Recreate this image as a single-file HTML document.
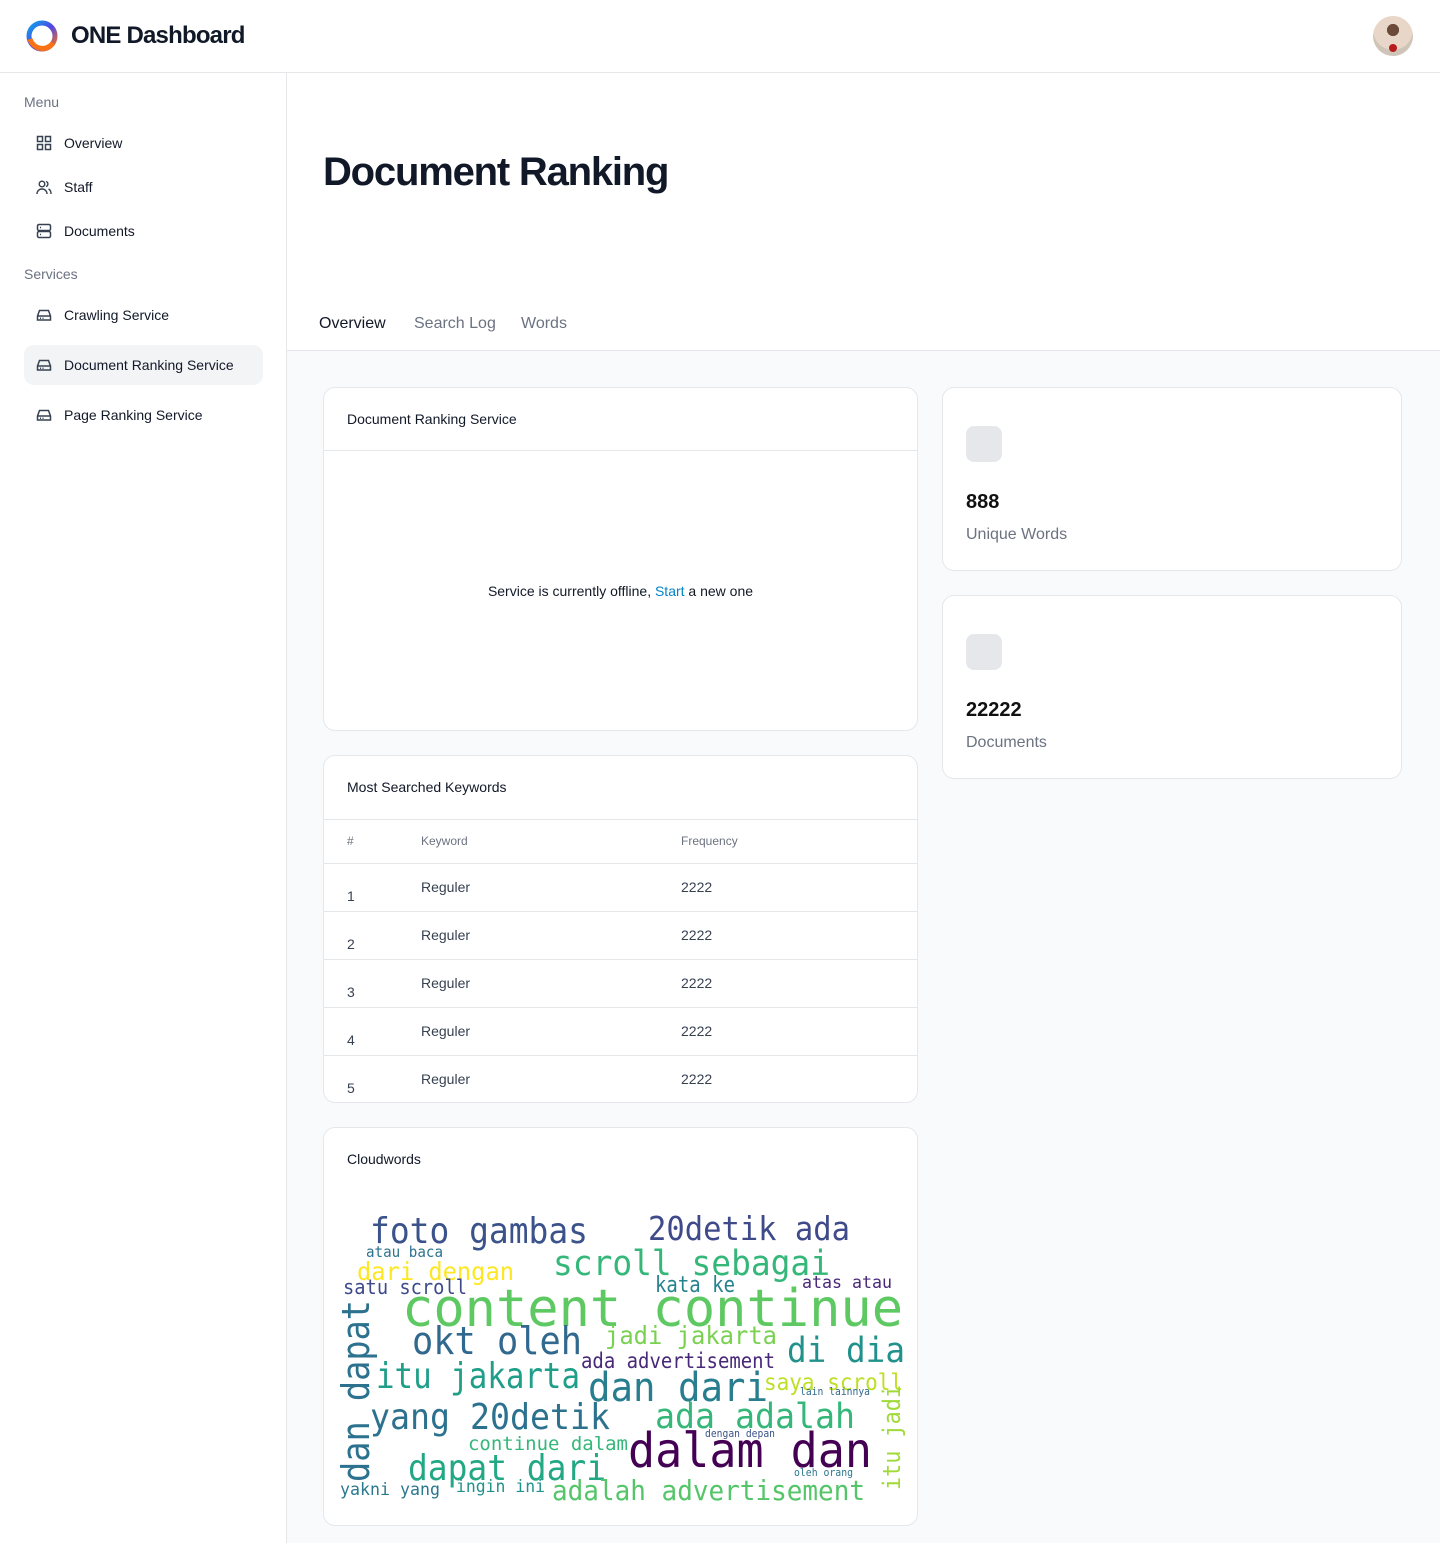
<!DOCTYPE html>
<html><head><meta charset="utf-8"><style>
*{box-sizing:border-box;margin:0;padding:0}
body{width:1440px;height:1543px;position:relative;font-family:"Liberation Sans",Arial,sans-serif;background:#fff;color:#111827;overflow:hidden}
.a{position:absolute}
.hdr{left:0;top:0;width:1440px;height:73px;border-bottom:1px solid #e5e7eb;background:#fff}
.side{left:0;top:73px;width:287px;height:1470px;border-right:1px solid #e5e7eb;background:#fff}
.main{left:287px;top:350px;width:1153px;height:1193px;background:#f9fafb;border-top:1px solid #e5e7eb}
.sec{font-size:14px;color:#6b7280}
.item{left:24px;width:239px;height:40px;border-radius:10px;font-size:14px;color:#111827}
.item span{position:absolute;left:40px;top:12px}
.item svg{position:absolute;left:12px;top:12px}
.card{background:#fff;border:1px solid #e5e7eb;border-radius:12px;overflow:hidden}
.ct{font-size:14px;color:#111827}
.row{position:absolute;left:0;width:594px;height:48px;border-top:1px solid #e5e7eb;font-size:14px;color:#374151}
.row b{font-weight:normal;position:absolute}
svg text{font-family:"DejaVu Sans Mono",monospace}
</style></head><body>
<div class="a hdr">
<svg class="a" style="left:25px;top:19px" width="34" height="34" viewBox="0 0 34 34"><defs><linearGradient id="g" x1="0" y1="0" x2="1" y2="1"><stop offset="0" stop-color="#0ea5e9"/><stop offset=".5" stop-color="#4f46e5"/><stop offset="1" stop-color="#f97316"/></linearGradient></defs><circle cx="17" cy="17" r="13" fill="none" stroke="url(#g)" stroke-width="5"/><path d="M5 20 A13 13 0 0 0 28 24" fill="none" stroke="#f97316" stroke-width="5"/></svg>
<div class="a" style="left:71px;top:22px;font-size:24px;font-weight:bold;letter-spacing:-0.8px">ONE Dashboard</div>
<div class="a" style="left:1373px;top:16px;width:40px;height:40px;border-radius:50%;background:radial-gradient(circle at 50% 35%,#6b4a3a 0 18%,#e8d6c8 19% 60%,#cfc4b8 61%);overflow:hidden"><div class="a" style="left:16px;top:28px;width:8px;height:8px;border-radius:50%;background:#b91c1c"></div></div>
</div>
<div class="a side">
<div class="a sec" style="left:24px;top:21px">Menu</div>
<div class="a item" style="top:50px"><svg width="16" height="16" viewBox="0 0 16 16" fill="none" stroke="#374151" stroke-width="1.5"><rect x="1.5" y="1.5" width="5" height="5"/><rect x="9.5" y="1.5" width="5" height="5"/><rect x="1.5" y="9.5" width="5" height="5"/><rect x="9.5" y="9.5" width="5" height="5"/></svg><span>Overview</span></div>
<div class="a item" style="top:94px"><svg width="16" height="16" viewBox="0 0 16 16" fill="none" stroke="#374151" stroke-width="1.4"><circle cx="6" cy="5" r="2.8"/><path d="M1 15c0-3 2.2-5 5-5s5 2 5 5"/><path d="M10 2.5a2.6 2.6 0 010 5M12.5 10c1.5.6 2.5 2.4 2.5 5"/></svg><span>Staff</span></div>
<div class="a item" style="top:138px"><svg width="16" height="16" viewBox="0 0 16 16" fill="none" stroke="#374151" stroke-width="1.5"><rect x="1.5" y="1.5" width="13" height="6" rx="1.5"/><rect x="1.5" y="8.5" width="13" height="6" rx="1.5"/><path d="M4 4.5h1M4 11.5h1"/></svg><span>Documents</span></div>
<div class="a sec" style="left:24px;top:193px">Services</div>
<div class="a item" style="top:222px"><svg width="16" height="16" viewBox="0 0 16 16" fill="none" stroke="#374151" stroke-width="1.5"><path d="M1.5 9l2-5.5h9l2 5.5v4h-13z M1.5 9h13"/><path d="M4 11.2h1M6.5 11.2h1"/></svg><span>Crawling Service</span></div>
<div class="a item" style="top:272px;background:#f3f4f6"><svg width="16" height="16" viewBox="0 0 16 16" fill="none" stroke="#374151" stroke-width="1.5"><path d="M1.5 9l2-5.5h9l2 5.5v4h-13z M1.5 9h13"/><path d="M4 11.2h1M6.5 11.2h1"/></svg><span>Document Ranking Service</span></div>
<div class="a item" style="top:322px"><svg width="16" height="16" viewBox="0 0 16 16" fill="none" stroke="#374151" stroke-width="1.5"><path d="M1.5 9l2-5.5h9l2 5.5v4h-13z M1.5 9h13"/><path d="M4 11.2h1M6.5 11.2h1"/></svg><span>Page Ranking Service</span></div>
</div>
<div class="a" style="left:323px;top:150px;font-size:40px;font-weight:bold;letter-spacing:-1.2px">Document Ranking</div>
<div class="a" style="left:319px;top:315px;font-size:16px;color:#111827">Overview</div>
<div class="a" style="left:414px;top:315px;font-size:16px;color:#6b7280">Search Log</div>
<div class="a" style="left:521px;top:315px;font-size:16px;color:#6b7280">Words</div>
<div class="a main"></div>

<div class="a card" style="left:323px;top:387px;width:595px;height:344px">
<div class="a ct" style="left:23px;top:23px">Document Ranking Service</div>
<div class="a" style="left:0;top:62px;width:595px;border-top:1px solid #e5e7eb"></div>
<div class="a" style="left:0;top:195px;width:593px;text-align:center;font-size:14px">Service is currently offline, <span style="color:#0284c7">Start</span> a new one</div>
</div>

<div class="a card" style="left:942px;top:387px;width:460px;height:184px">
<div class="a" style="left:23px;top:38px;width:36px;height:36px;border-radius:8px;background:#e5e7eb"></div>
<div class="a" style="left:23px;top:103px;font-size:20px;font-weight:bold;color:#111">888</div>
<div class="a" style="left:23px;top:138px;font-size:16px;color:#6b7280">Unique Words</div></div>
<div class="a card" style="left:942px;top:595px;width:460px;height:184px">
<div class="a" style="left:23px;top:38px;width:36px;height:36px;border-radius:8px;background:#e5e7eb"></div>
<div class="a" style="left:23px;top:103px;font-size:20px;font-weight:bold;color:#111">22222</div>
<div class="a" style="left:23px;top:138px;font-size:16px;color:#6b7280">Documents</div></div>

<div class="a card" style="left:323px;top:755px;width:595px;height:348px">
<div class="a ct" style="left:23px;top:23px">Most Searched Keywords</div>
<div class="row" style="top:63px;height:44px;font-size:12px;color:#6b7280"><b style="left:23px;top:14px">#</b><b style="left:97px;top:14px">Keyword</b><b style="left:357px;top:14px">Frequency</b></div>
<div class="row" style="top:107px"><b style="left:23px;top:24px">1</b><b style="left:97px;top:15px">Reguler</b><b style="left:357px;top:15px">2222</b></div>
<div class="row" style="top:155px"><b style="left:23px;top:24px">2</b><b style="left:97px;top:15px">Reguler</b><b style="left:357px;top:15px">2222</b></div>
<div class="row" style="top:203px"><b style="left:23px;top:24px">3</b><b style="left:97px;top:15px">Reguler</b><b style="left:357px;top:15px">2222</b></div>
<div class="row" style="top:251px"><b style="left:23px;top:24px">4</b><b style="left:97px;top:15px">Reguler</b><b style="left:357px;top:15px">2222</b></div>
<div class="row" style="top:299px"><b style="left:23px;top:24px">5</b><b style="left:97px;top:15px">Reguler</b><b style="left:357px;top:15px">2222</b></div>
</div>

<div class="a card" style="left:323px;top:1127px;width:595px;height:399px">
<div class="a ct" style="left:23px;top:23px">Cloudwords</div></div>
<svg class="a" style="left:0;top:0" width="1440" height="1543">
<g lengthAdjust="spacingAndGlyphs">
<text x="370" y="1243" font-size="36" fill="#3b528b" textLength="218" lengthAdjust="spacingAndGlyphs">foto gambas</text>
<text x="648" y="1240" font-size="33" fill="#3e4a89" textLength="202" lengthAdjust="spacingAndGlyphs">20detik ada</text>
<text x="553" y="1275" font-size="35" fill="#35b779" textLength="277" lengthAdjust="spacingAndGlyphs">scroll sebagai</text>
<text x="357" y="1280" font-size="25" fill="#fde725" textLength="157" lengthAdjust="spacingAndGlyphs">dari dengan</text>
<text x="366" y="1257" font-size="15" fill="#2c728e" textLength="77" lengthAdjust="spacingAndGlyphs">atau baca</text>
<text x="343" y="1294" font-size="20" fill="#3e4a89" textLength="124" lengthAdjust="spacingAndGlyphs">satu scroll</text>
<text x="655" y="1292" font-size="22" fill="#26828e" textLength="80" lengthAdjust="spacingAndGlyphs">kata ke</text>
<text x="802" y="1288" font-size="17" fill="#482878" textLength="90" lengthAdjust="spacingAndGlyphs">atas atau</text>
<text x="402" y="1326" font-size="52" fill="#5ec962" textLength="501" lengthAdjust="spacingAndGlyphs">content continue</text>
<text x="412" y="1354" font-size="38" fill="#31688e" textLength="170" lengthAdjust="spacingAndGlyphs">okt oleh</text>
<text x="605" y="1344" font-size="25" fill="#7ad151" textLength="172" lengthAdjust="spacingAndGlyphs">jadi jakarta</text>
<text x="787" y="1362" font-size="35" fill="#21918c" textLength="118" lengthAdjust="spacingAndGlyphs">di dia</text>
<text x="581" y="1368" font-size="21" fill="#482878" textLength="194" lengthAdjust="spacingAndGlyphs">ada advertisement</text>
<text x="376" y="1388" font-size="36" fill="#1f9e89" textLength="204" lengthAdjust="spacingAndGlyphs">itu jakarta</text>
<text x="588" y="1401" font-size="40" fill="#287d8e" textLength="180" lengthAdjust="spacingAndGlyphs">dan dari</text>
<text x="764" y="1390" font-size="23" fill="#bddf26" textLength="139" lengthAdjust="spacingAndGlyphs">saya scroll</text>
<text x="370" y="1429" font-size="36" fill="#2c728e" textLength="240" lengthAdjust="spacingAndGlyphs">yang 20detik</text>
<text x="655" y="1428" font-size="35" fill="#35b779" textLength="200" lengthAdjust="spacingAndGlyphs">ada adalah</text>
<text x="468" y="1450" font-size="19" fill="#35b779" textLength="160" lengthAdjust="spacingAndGlyphs">continue dalam</text>
<text x="628" y="1467" font-size="48" fill="#440154" textLength="244" lengthAdjust="spacingAndGlyphs">dalam dan</text>
<text x="408" y="1480" font-size="36" fill="#22a884" textLength="198" lengthAdjust="spacingAndGlyphs">dapat dari</text>
<text x="340" y="1495" font-size="17" fill="#2a788e" textLength="100" lengthAdjust="spacingAndGlyphs">yakni yang</text>
<text x="456" y="1492" font-size="17" fill="#21918c" textLength="89" lengthAdjust="spacingAndGlyphs">ingin ini</text>
<text x="552" y="1500" font-size="28" fill="#54c568" textLength="313" lengthAdjust="spacingAndGlyphs">adalah advertisement</text>
<text x="800" y="1395" font-size="11" fill="#31688e" textLength="70" lengthAdjust="spacingAndGlyphs">lain lainnya</text>
<text x="705" y="1437" font-size="11" fill="#3b528b" textLength="70" lengthAdjust="spacingAndGlyphs">dengan depan</text>
<text x="794" y="1476" font-size="11" fill="#2a788e" textLength="59" lengthAdjust="spacingAndGlyphs">oleh orang</text>
<text transform="translate(369,1482) rotate(-90)" font-size="38" fill="#2c728e" textLength="182" lengthAdjust="spacingAndGlyphs">dan dapat</text>
<text transform="translate(900,1490) rotate(-90)" font-size="24" fill="#a0da39" textLength="105" lengthAdjust="spacingAndGlyphs">itu jadi</text>
</g>
</svg>
</body></html>
